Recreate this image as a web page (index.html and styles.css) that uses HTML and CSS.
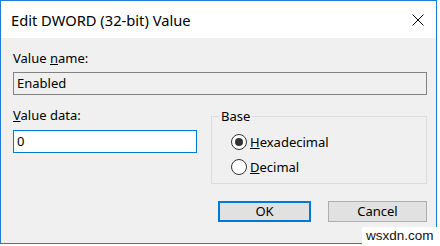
FILE: index.html
```html
<!DOCTYPE html>
<html lang="en">
<head>
    <meta charset="UTF-8">
    <meta name="viewport" content="width=device-width, initial-scale=1.0">
    <title>Edit DWORD (32-bit) Value</title>
    <link rel="stylesheet" href="styles.css">
</head>
<body>
    <div class="window">
        <div class="titlebar">
            <span class="title">Edit DWORD (32-bit) Value</span>
            <svg class="close" width="12" height="12" viewBox="0 0 12 12">
                <path d="M0.5 0.5 L11.5 11.5 M11.5 0.5 L0.5 11.5" stroke="#000" stroke-width="1" fill="none"/>
            </svg>
        </div>
        <div class="content">
            <div class="label name-label">Value <u>n</u>ame:</div>
            <div class="field readonly">Enabled</div>
            <div class="row">
                <div class="data-col">
                    <div class="label"><u>V</u>alue data:</div>
                    <div class="field edit">0</div>
                </div>
                <fieldset class="base">
                    <legend>Base</legend>
                    <div class="radio checked"><span class="dot"></span><span><u>H</u>exadecimal</span></div>
                    <div class="radio"><span class="dot"></span><span><u>D</u>ecimal</span></div>
                </fieldset>
            </div>
            <div class="buttons">
                <button class="btn ok">OK</button>
                <button class="btn cancel">Cancel</button>
            </div>
        </div>
    </div>
    <div class="watermark">wsxdn.com</div>
</body>
</html>
```

FILE: styles.css
```css
body {
    margin: 0;
    background: #fff;
    font-family: "Noto Sans", sans-serif;
    font-size: 13px;
    color: #000;
}
.window {
    width: 437px;
    height: 244px;
    box-sizing: border-box;
    border: 1px solid #1c7dd6;
    background: #f0f0f0;
    display: flex;
    flex-direction: column;
}
.titlebar {
    height: 37px;
    background: #fff;
    display: flex;
    align-items: center;
    justify-content: space-between;
    padding: 0 12px 0 10px;
}
.title {
    font-size: 14.7px;
    line-height: 20px;
}
.close {
    display: block;
}
.content {
    padding: 0 9px 0 12px;
}
.label {
    line-height: 16px;
}
.name-label {
    margin-top: 12px;
    margin-bottom: 6px;
}
.field {
    height: 23px;
    box-sizing: border-box;
    line-height: 21px;
    padding: 0 3px;
}
.readonly {
    border: 1px solid #838383;
    background: #f0f0f0;
}
.edit {
    border: 1px solid #0078d7;
    background: #fff;
    width: 184px;
    margin-top: 7px;
}
.row {
    display: flex;
    margin-top: 12px;
}
.data-col {
    width: 198px;
}
.base {
    width: 216px;
    box-sizing: border-box;
    margin: 1px 0 0 0;
    padding: 10px 0 8px 0;
    border: 1px solid #dcdcdc;
    min-width: 0;
}
.base legend {
    padding: 0 2px;
    margin-left: 7px;
    line-height: 16px;
}
.radio {
    display: flex;
    align-items: center;
    gap: 3px;
    height: 16px;
    line-height: 16px;
    margin-left: 19px;
}
.radio + .radio {
    margin-top: 9px;
}
.dot {
    width: 16px;
    height: 16px;
    box-sizing: border-box;
    border: 1px solid #333;
    border-radius: 50%;
    background: #fff;
    display: flex;
    align-items: center;
    justify-content: center;
}
.checked .dot::after {
    content: "";
    width: 8px;
    height: 8px;
    border-radius: 50%;
    background: #333;
}
.buttons {
    display: flex;
    justify-content: flex-end;
    gap: 17px;
    margin-top: 17px;
}
.btn {
    height: 21px;
    box-sizing: border-box;
    background: #e1e1e1;
    border: 1px solid #adadad;
    font-family: "Noto Sans", sans-serif;
    font-size: 13px;
    line-height: 17px;
    color: #000;
    padding: 0;
}
.ok {
    width: 93px;
    border: 2px solid #0078d7;
}
.cancel {
    width: 99px;
}
.watermark {
    position: absolute;
    left: 362px;
    top: 227px;
    width: 78px;
    height: 19px;
    background: #fff;
    font-family: "Liberation Sans", Arial, sans-serif;
    font-size: 13.5px;
    line-height: 18px;
    padding-left: 4px;
    box-sizing: border-box;
    color: #111;
}
```
